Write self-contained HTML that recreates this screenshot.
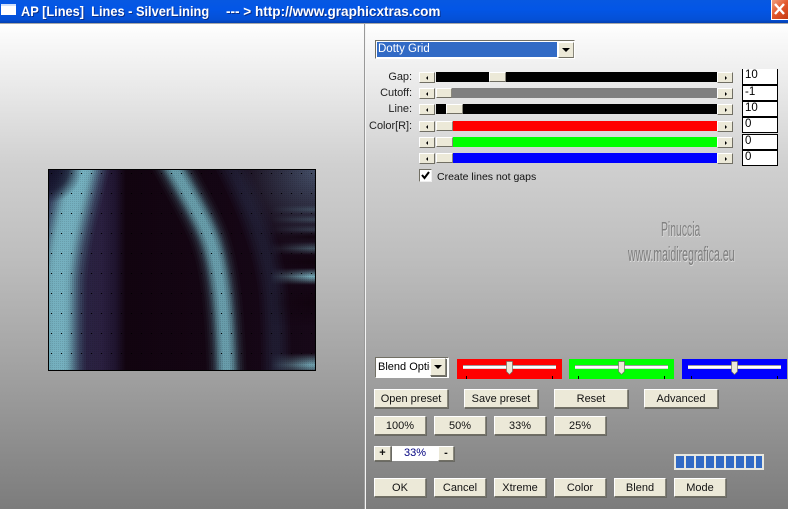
<!DOCTYPE html>
<html><head><meta charset="utf-8"><style>
html,body{margin:0;padding:0}
body{width:788px;height:509px;overflow:hidden;position:relative;font-family:"Liberation Sans",sans-serif;font-size:11px;color:#000;background:#808080}
div{position:absolute;box-sizing:border-box}
.b{background:#ece9d8;border:1px solid;border-color:#fff #8a887c #716f64 #fff;box-shadow:1px 1px 0 #6a6a64;text-align:center;white-space:nowrap;color:#111}
.t{height:19px;line-height:18px}
.s{height:10px;font-size:0}
.ar{width:16px;height:11px;background:#ece9d8;border:1px solid;border-color:#fff #716f64 #716f64 #fff}
.ar:after{content:"";position:absolute;top:3px;left:6px;border:2px solid transparent;border-left-width:0;border-right:2px solid #000}
.ar.r:after{border-right-width:0;border-left:2px solid #000;left:7px}
.tb{left:742px;width:36px;background:#fff;border:1px solid #000;height:16px;line-height:13px;padding-left:2px;font-size:11.5px}
.l{right:376px;text-align:right;font-size:11px;letter-spacing:-.05px;color:#222;white-space:nowrap}
.cell{top:456px;width:8px;height:12px;background:#316ac5}
.tt{top:2px;height:18px;line-height:18px;color:#fff;font-weight:bold;font-size:14px;white-space:pre;text-shadow:1px 1px 0 #0a2f8a;transform-origin:0 0}
</style></head><body>
<div style="left:0;top:23px;width:788px;height:486px;background:linear-gradient(#fff 0,#fafafa 12px,#d0d0d0 142px,#bdbdbd 237px,#a4a4a4 337px,#7c7c7c 100%)"></div>
<div style="left:0;top:0;width:788px;height:23px;background:linear-gradient(#0758e2,#0356e6 40%,#0450d6 85%,#0340b0)"></div>
<div style="left:0;top:23px;width:788px;height:1px;background:#a8a8a8"></div>
<div style="left:1px;top:4px;width:15px;height:11px;background:#fff;border-top:2px solid #cfe0fa"></div>
<div class="tt" style="left:21px;transform:scaleX(.914)">AP [Lines]  Lines - SilverLining</div>
<div class="tt" style="left:226px;transform:scaleX(.968)">--- &gt; http://www.graphicxtras.com</div>
<div style="left:771px;top:0;width:17px;height:20px;background:linear-gradient(135deg,#f0a080,#e2562a 50%,#c43a12);border:1px solid #fff;border-top:0;border-right:0"></div>
<svg style="position:absolute;left:771px;top:0" width="17" height="20"><path d="M4 4L13 14M13 4L4 14" stroke="#fff" stroke-width="2.4" fill="none"/></svg>
<div style="left:364px;top:24px;width:1px;height:485px;background:#999"></div>
<div style="left:365px;top:24px;width:1px;height:485px;background:#f4f4f4"></div>

<!-- preview -->
<svg style="position:absolute;left:48px;top:169px" width="268" height="202" viewBox="0 0 268 202">
<defs>
<linearGradient id="bg" x1="0" x2="1" y1="0" y2="0"><stop offset="0" stop-color="#2a2a48"/><stop offset=".2" stop-color="#2a2040"/><stop offset=".25" stop-color="#201530"/><stop offset=".29" stop-color="#120410"/><stop offset="1" stop-color="#170818"/></linearGradient>
<radialGradient id="tr" gradientUnits="userSpaceOnUse" cx="268" cy="0" r="85"><stop offset="0" stop-color="#46516a"/><stop offset=".5" stop-color="#3a4258" stop-opacity=".6"/><stop offset="1" stop-color="#3a4258" stop-opacity="0"/></radialGradient>
<radialGradient id="tl" gradientUnits="userSpaceOnUse" cx="0" cy="0" r="34"><stop offset="0" stop-color="#14122a"/><stop offset=".6" stop-color="#14122a" stop-opacity=".75"/><stop offset="1" stop-color="#14122a" stop-opacity="0"/></radialGradient>
<linearGradient id="hs" x1="0" x2="0" y1="0" y2="1"><stop offset="0" stop-color="#7fbcc9" stop-opacity="0"/><stop offset=".5" stop-color="#7fbcc9"/><stop offset="1" stop-color="#7fbcc9" stop-opacity="0"/></linearGradient>
<linearGradient id="dk" x1="0" x2="0" y1="0" y2="1"><stop offset="0" stop-color="#12040f" stop-opacity="0"/><stop offset=".5" stop-color="#12040f"/><stop offset="1" stop-color="#12040f" stop-opacity="0"/></linearGradient>
<linearGradient id="fade" gradientUnits="userSpaceOnUse" x1="222" x2="262" y1="0" y2="0"><stop offset="0" stop-color="#000"/><stop offset="1" stop-color="#fff"/></linearGradient>
<mask id="mf" maskUnits="userSpaceOnUse" x="0" y="0" width="268" height="202"><rect width="268" height="202" fill="url(#fade)"/></mask>
<pattern id="d" width="10" height="20" patternUnits="userSpaceOnUse" x="3" y="4"><rect width="1" height="1" fill="#000"/></pattern>
<pattern id="d2" width="2" height="2" patternUnits="userSpaceOnUse"><rect width="1" height="1" fill="#000" opacity=".1"/></pattern>
<clipPath id="c"><rect width="268" height="202"/></clipPath>
<path id="p1" fill="none" d="M36 -12C26 30 14 70 11 110C10 150 10 180 10 214"/>
<path id="p2" fill="none" d="M120 -12C137 20 152 45 160 65C172 95 177 140 179 214"/>
<path id="p3" fill="none" d="M178 -12C200 30 222 80 226 130C228 160 228 190 228 214"/>
</defs>
<rect width="268" height="202" fill="url(#bg)"/>
<g clip-path="url(#c)">
<rect x="180" y="0" width="88" height="85" fill="url(#tr)"/>
<g stroke="#2a2e48" opacity=".7">
<use href="#p3" stroke-width="30" opacity=".16"/><use href="#p3" stroke-width="25" opacity=".2"/><use href="#p3" stroke-width="20" opacity=".25"/><use href="#p3" stroke-width="14" opacity=".3"/><use href="#p3" stroke-width="8" opacity=".35"/>
</g>
<g stroke="#78b6c3">
<use href="#p1" stroke-width="56" opacity=".05"/><use href="#p1" stroke-width="51" opacity=".07"/><use href="#p1" stroke-width="47" opacity=".09"/><use href="#p1" stroke-width="42" opacity=".12"/><use href="#p1" stroke-width="38" opacity=".16"/><use href="#p1" stroke-width="34" opacity=".2"/><use href="#p1" stroke-width="30" opacity=".26"/><use href="#p1" stroke-width="26" opacity=".33"/><use href="#p1" stroke-width="22" opacity=".42"/><use href="#p1" stroke-width="18" opacity=".5"/><use href="#p1" stroke-width="12" opacity=".5"/>
</g>
<rect x="0" y="0" width="34" height="34" fill="url(#tl)"/>
<g stroke="#70abb8">
<use href="#p2" stroke-width="40" opacity=".04"/><use href="#p2" stroke-width="35" opacity=".06"/><use href="#p2" stroke-width="31" opacity=".08"/><use href="#p2" stroke-width="27" opacity=".1"/><use href="#p2" stroke-width="24" opacity=".13"/><use href="#p2" stroke-width="21" opacity=".18"/><use href="#p2" stroke-width="18" opacity=".24"/><use href="#p2" stroke-width="15" opacity=".3"/><use href="#p2" stroke-width="11" opacity=".4"/><use href="#p2" stroke-width="7" opacity=".5"/>
</g>
<g mask="url(#mf)">
<rect x="222" y="36" width="46" height="9" fill="url(#hs)" opacity=".22"/>
<rect x="222" y="46" width="46" height="9" fill="url(#hs)" opacity=".22"/>
<rect x="222" y="56" width="46" height="9" fill="url(#hs)" opacity=".18"/>
<rect x="222" y="62" width="46" height="12" fill="url(#dk)" opacity=".9"/>
<rect x="222" y="73" width="46" height="13" fill="url(#hs)" opacity=".4"/>
<rect x="222" y="84" width="46" height="18" fill="url(#dk)"/>
<rect x="210" y="99" width="58" height="17" fill="url(#hs)" opacity=".9"/>
<rect x="222" y="112" width="46" height="44" fill="url(#dk)" opacity=".9"/>
<rect x="222" y="184" width="46" height="24" fill="url(#hs)" opacity=".85"/>
</g>
<rect width="268" height="202" fill="url(#d2)"/>
<rect width="268" height="202" fill="url(#d)"/>
</g>
<rect x=".5" y=".5" width="267" height="201" fill="none" stroke="#000"/>
</svg>

<!-- watermark -->
<div style="left:661px;top:219px;font-size:20px;color:#808080;transform-origin:0 0;transform:scaleX(.52);white-space:nowrap;text-shadow:1px 1px 0 #ddd">Pinuccia</div>
<div style="left:628px;top:244px;font-size:20px;color:#7c7c7c;transform-origin:0 0;transform:scaleX(.53);white-space:nowrap;text-shadow:1px 1px 0 #ddd">www.maidiregrafica.eu</div>

<!-- dropdown -->
<div style="left:375px;top:40px;width:200px;height:19px;background:#fff;border:1px solid;border-color:#716f64 #fff #fff #716f64"></div>
<div style="left:377px;top:42px;width:180px;height:15px;background:#316ac5;color:#fff;line-height:15px;padding-left:1px;font-size:11.5px">Dotty Grid</div>
<div class="b" style="left:558px;top:42px;width:16px;height:16px;box-shadow:none"></div>
<div style="left:562px;top:48px;width:0;height:0;border:4px solid transparent;border-top:4px solid #000;border-bottom:0"></div>

<!-- labels -->
<div class="l" style="top:71px">Gap:</div>
<div class="l" style="top:87px">Cutoff:</div>
<div class="l" style="top:103px">Line:</div>
<div class="l" style="top:120px">Color[R]:</div>

<!-- scrollbars -->
<div class="s" style="left:436px;top:72px;width:281px;background:#000"></div>
<div class="s" style="left:436px;top:88px;width:281px;background:#808080"></div>
<div class="s" style="left:436px;top:104px;width:281px;background:#000"></div>
<div class="s" style="left:453px;top:121px;width:264px;background:#f00"></div>
<div class="s" style="left:453px;top:137px;width:264px;background:#0f0"></div>
<div class="s" style="left:453px;top:153px;width:264px;background:#00f"></div>

<div class="ar" style="left:419px;top:72px"></div><div class="ar r" style="left:717px;top:72px"></div><div class="b" style="left:489px;top:72px;width:17px;height:10px;box-shadow:none"></div>
<div class="ar" style="left:419px;top:88px"></div><div class="ar r" style="left:717px;top:88px"></div><div class="b" style="left:436px;top:88px;width:16px;height:10px;box-shadow:none"></div>
<div class="ar" style="left:419px;top:104px"></div><div class="ar r" style="left:717px;top:104px"></div><div class="b" style="left:446px;top:104px;width:17px;height:10px;box-shadow:none"></div>
<div class="ar" style="left:419px;top:121px"></div><div class="ar r" style="left:717px;top:121px"></div><div class="b" style="left:436px;top:121px;width:17px;height:10px;box-shadow:none"></div>
<div class="ar" style="left:419px;top:137px"></div><div class="ar r" style="left:717px;top:137px"></div><div class="b" style="left:436px;top:137px;width:17px;height:10px;box-shadow:none"></div>
<div class="ar" style="left:419px;top:153px"></div><div class="ar r" style="left:717px;top:153px"></div><div class="b" style="left:436px;top:153px;width:17px;height:10px;box-shadow:none"></div>

<div class="tb" style="top:69px;border-top:0">10</div>
<div class="tb" style="top:85px">-1</div>
<div class="tb" style="top:101px">10</div>
<div class="tb" style="top:117px">0</div>
<div class="tb" style="top:134px">0</div>
<div class="tb" style="top:150px">0</div>

<!-- checkbox -->
<div style="left:419px;top:169px;width:13px;height:13px;background:#fff;border:1px solid;border-color:#716f64 #eee #eee #716f64"></div>
<svg style="position:absolute;left:419px;top:169px" width="13" height="13"><path d="M3 6L5.5 9L10 3" stroke="#000" stroke-width="2" fill="none"/></svg>
<div style="left:437px;top:170px;font-size:10.5px;line-height:14px;white-space:nowrap;color:#111">Create lines not gaps</div>

<!-- blend -->
<div style="left:375px;top:357px;width:74px;height:21px;background:#fff;border:1px solid;border-color:#716f64 #fff #fff #716f64"></div>
<div style="left:378px;top:359px;width:52px;height:16px;line-height:16px;overflow:hidden;white-space:nowrap;font-size:11px">Blend Options</div>
<div class="b" style="left:430px;top:358px;width:16px;height:18px"></div>
<div style="left:434px;top:365px;width:0;height:0;border:4px solid transparent;border-top:4px solid #000;border-bottom:0"></div>

<div style="left:457px;top:359px;width:105px;height:20px;background:#f00"></div>
<div style="left:569px;top:359px;width:105px;height:20px;background:#0f0"></div>
<div style="left:682px;top:359px;width:105px;height:20px;background:#00f"></div>
<div style="left:463px;top:365px;width:93px;height:4px;background:#fff;border-top:1px solid #9a9a9a;border-bottom:1px solid #ddd"></div>
<div style="left:575px;top:365px;width:93px;height:4px;background:#fff;border-top:1px solid #9a9a9a;border-bottom:1px solid #ddd"></div>
<div style="left:688px;top:365px;width:93px;height:4px;background:#fff;border-top:1px solid #9a9a9a;border-bottom:1px solid #ddd"></div>
<svg style="position:absolute;left:457px;top:359px" width="330" height="20">
<g fill="#ece9d8" stroke="#716f64" stroke-width=".7"><path d="M49.5 2.5h6v10l-3 3l-3-3z"/><path d="M161.5 2.5h6v10l-3 3l-3-3z"/><path d="M274.5 2.5h6v10l-3 3l-3-3z"/></g>
<g fill="#000"><rect x="9" y="17" width="1" height="3"/><rect x="95" y="17" width="1" height="3"/><rect x="121" y="17" width="1" height="3"/><rect x="207" y="17" width="1" height="3"/><rect x="234" y="17" width="1" height="3"/><rect x="320" y="17" width="1" height="3"/></g>
</svg>

<!-- buttons -->
<div class="b t" style="left:374px;top:389px;width:74px">Open preset</div>
<div class="b t" style="left:464px;top:389px;width:74px">Save preset</div>
<div class="b t" style="left:554px;top:389px;width:74px">Reset</div>
<div class="b t" style="left:644px;top:389px;width:74px">Advanced</div>
<div class="b t" style="left:374px;top:416px;width:52px">100%</div>
<div class="b t" style="left:434px;top:416px;width:52px">50%</div>
<div class="b t" style="left:494px;top:416px;width:52px">33%</div>
<div class="b t" style="left:554px;top:416px;width:52px">25%</div>

<div class="b" style="left:374px;top:446px;width:17px;height:15px;line-height:13px;font-weight:bold">+</div>
<div style="left:392px;top:446px;width:46px;height:15px;background:#fff;color:#000080;text-align:center;line-height:15px;font-size:11px">33%</div>
<div class="b" style="left:438px;top:446px;width:16px;height:15px;line-height:12px;font-weight:bold">-</div>

<div style="left:674px;top:454px;width:90px;height:16px;background:#e8e8e0"></div>
<div class="cell" style="left:676px"></div>
<div class="cell" style="left:686px"></div>
<div class="cell" style="left:696px"></div>
<div class="cell" style="left:706px"></div>
<div class="cell" style="left:716px"></div>
<div class="cell" style="left:726px"></div>
<div class="cell" style="left:736px"></div>
<div class="cell" style="left:746px"></div>
<div class="cell" style="left:756px;width:6px"></div>

<div class="b t" style="left:374px;top:478px;width:52px">OK</div>
<div class="b t" style="left:434px;top:478px;width:52px">Cancel</div>
<div class="b t" style="left:494px;top:478px;width:52px">Xtreme</div>
<div class="b t" style="left:554px;top:478px;width:52px">Color</div>
<div class="b t" style="left:614px;top:478px;width:52px">Blend</div>
<div class="b t" style="left:674px;top:478px;width:52px">Mode</div>
</body></html>
